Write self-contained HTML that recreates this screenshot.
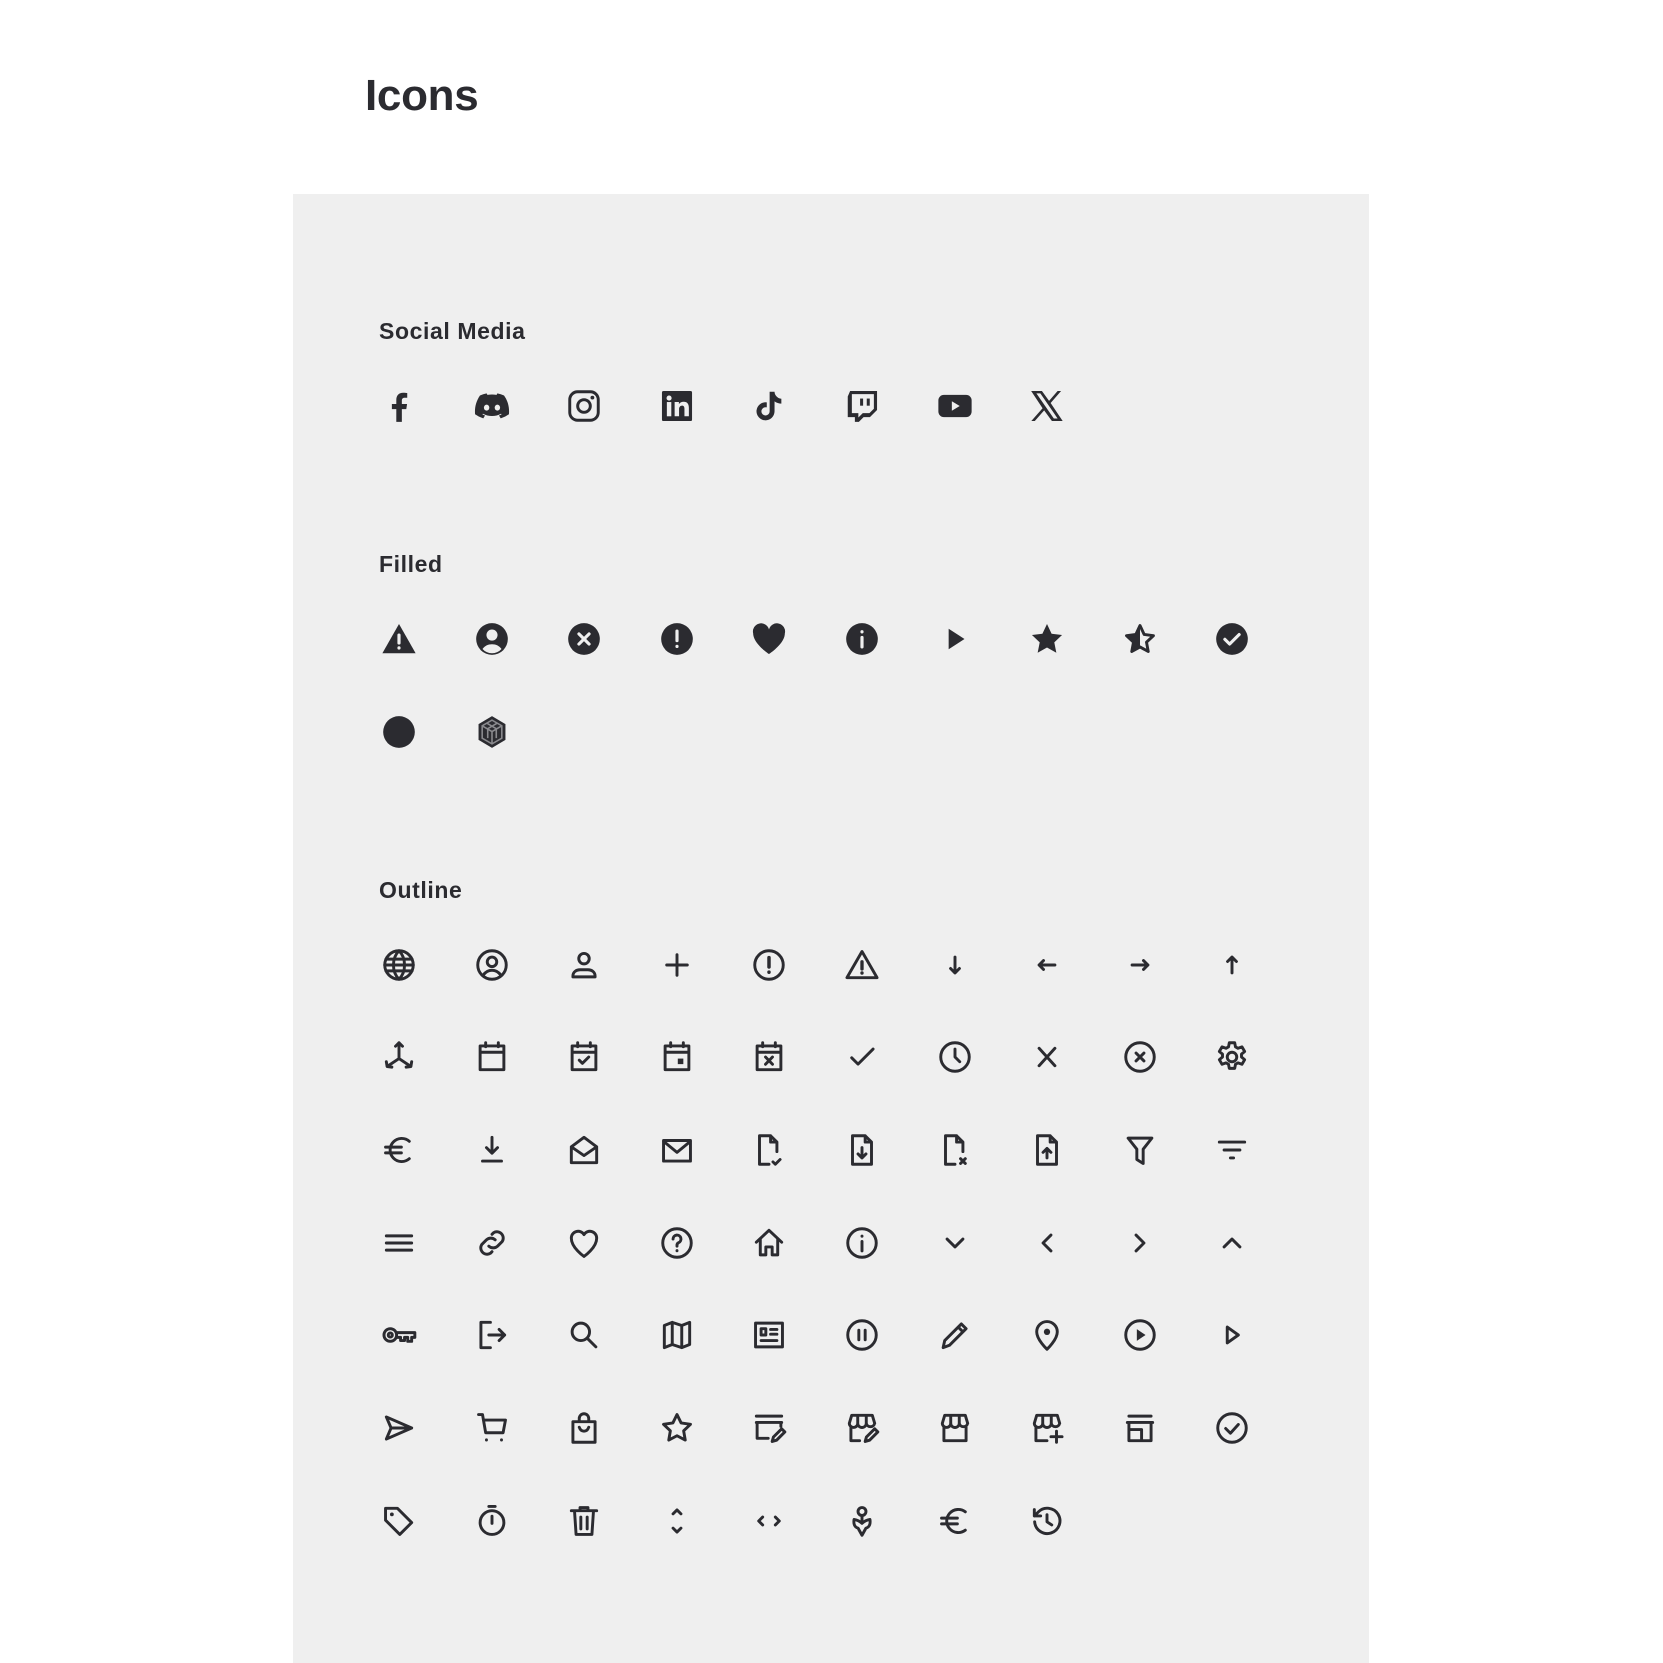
<!DOCTYPE html>
<html><head><meta charset="utf-8"><style>
html,body{margin:0;padding:0;background:#fff;width:1663px;height:1663px;overflow:hidden;font-family:"Liberation Sans",sans-serif;color:#2b2b30}
h1{position:absolute;left:365px;top:70px;margin:0;font-size:44px;font-weight:700;line-height:52px;letter-spacing:-0.3px}
.panel{position:absolute;left:293px;top:194px;width:1076px;height:1469px;background:#efefef}
.lbl{position:absolute;left:379px;font-size:23px;font-weight:700;line-height:28px;letter-spacing:0.6px}
svg{position:absolute;width:38px;height:38px}
.o{fill:none;stroke:#2b2b30;stroke-width:1.85;stroke-linecap:round;stroke-linejoin:round}
.f{fill:#2b2b30}
.b{fill:#efefef}
.bs{fill:none;stroke:#efefef;stroke-width:2;stroke-linecap:round}
</style></head><body>
<h1>Icons</h1>
<div class="panel"></div>
<div class="lbl" style="top:317px">Social Media</div>
<div class="lbl" style="top:550px">Filled</div>
<div class="lbl" style="top:876px">Outline</div>

<!-- Social -->
<svg viewBox="0 0 24 24" style="left:380px;top:387px"><path class="f" d="M13.8 22v-8h2.8l.5-3.3h-3.3V8.6c0-1 .4-1.8 1.8-1.8h1.6V3.8c-.4-.1-1.5-.2-2.6-.2-2.6 0-4.300 1.600-4.300 4.500v2.600H7.5V14h2.8v8z"/></svg>
<svg viewBox="0 0 24 24" style="left:473px;top:387px"><path class="f" d="M19.6 5.4A17 17 0 0 0 15.4 4l-.5 1a15 15 0 0 0-5.8 0L8.6 4a17 17 0 0 0-4.2 1.4C1.7 9.4 1 13.3 1.3 17.2a17 17 0 0 0 5.2 2.6l1.1-1.8c-.6-.2-1.2-.5-1.7-.8l.4-.3a12 12 0 0 0 11.4 0l.4.3c-.5.3-1.1.6-1.7.8l1.1 1.8a17 17 0 0 0 5.2-2.6c.4-4.5-.7-8.4-3.1-11.8z"/><ellipse class="b" cx="8.6" cy="13" rx="1.7" ry="1.9"/><ellipse class="b" cx="15.4" cy="13" rx="1.7" ry="1.9"/></svg>
<svg viewBox="0 0 24 24" style="left:565px;top:387px"><rect class="o" x="3" y="3" width="18" height="18" rx="5" stroke-width="2.2"/><circle class="o" cx="12" cy="12" r="4" stroke-width="2.2"/><circle class="f" cx="17.3" cy="6.7" r="1.2"/></svg>
<svg viewBox="0 0 24 24" style="left:658px;top:387px"><rect class="f" x="2.5" y="2.5" width="19" height="19" rx="1"/><circle class="b" cx="7" cy="7" r="1.6"/><rect class="b" x="5.6" y="9.5" width="2.8" height="9"/><path class="b" d="M10.5 9.5h2.7v1.3c.6-1 1.7-1.5 3-1.5 2.3 0 3.3 1.4 3.3 3.9V18.5h-2.8v-4.7c0-1.2-.4-2-1.5-2s-1.9.9-1.9 2.1v4.6h-2.8z"/></svg>
<svg viewBox="0 0 24 24" style="left:750px;top:387px"><path class="f" d="M16.6 5.8A4.3 4.3 0 0 1 15.5 3h-3.1v12.4a2.6 2.6 0 1 1-2.6-2.6c.3 0 .5 0 .8.1V9.7a5.7 5.7 0 1 0 4.9 5.7V9.1a7.3 7.3 0 0 0 4.3 1.4V7.4a4.3 4.3 0 0 1-3.2-1.6z"/></svg>
<svg viewBox="0 0 24 24" style="left:843px;top:387px"><path class="f" d="M4.5 2.5L3 6v13h4.5v3h2.5l3-3h4l4.5-4.5V2.5z"/><path class="b" d="M19.5 13.7l-2.8 2.8h-4.2l-2.8 2.8v-2.8H5.6V4.5h13.9z"/><rect class="f" x="10.8" y="7.3" width="1.9" height="4.5"/><rect class="f" x="15" y="7.3" width="1.9" height="4.5"/></svg>
<svg viewBox="0 0 24 24" style="left:936px;top:387px"><rect class="f" x="1.5" y="5" width="21" height="14" rx="3.5"/><path class="b" d="M10 9v6l5-3z"/></svg>
<svg viewBox="0 0 24 24" style="left:1028px;top:387px"><path class="f" d="M2 2.5h6.8l4.5 6.3 5.4-6.3h2.2l-6.6 7.6L21.9 21.5h-6.8l-4.9-6.7-5.9 6.7H2.1l7.1-8.1z"/><path class="b" d="M5.3 4l11 15.9h2.4L7.8 4z"/></svg>

<!-- Filled row 1 -->
<svg viewBox="0 0 24 24" style="left:380px;top:620px"><path class="f" d="M12 2.5L1.5 21h21z"/><path class="bs" d="M12 9.5v5M12 17.6v.1"/></svg>
<svg viewBox="0 0 24 24" style="left:473px;top:620px"><circle class="f" cx="12" cy="12" r="10"/><circle class="b" cx="12" cy="9.5" r="3.5"/><path class="b" d="M6 18.3c1.5-2 3.5-3 6-3s4.5 1 6 3a8 8 0 0 1-12 0z"/></svg>
<svg viewBox="0 0 24 24" style="left:565px;top:620px"><circle class="f" cx="12" cy="12" r="10"/><path class="bs" d="M8.8 8.8l6.4 6.4M15.2 8.8l-6.4 6.4" stroke-width="2.2"/></svg>
<svg viewBox="0 0 24 24" style="left:658px;top:620px"><circle class="f" cx="12" cy="12" r="10"/><path class="bs" d="M12 7v6M12 16.6v.1" stroke-width="2.3"/></svg>
<svg viewBox="0 0 24 24" style="left:750px;top:620px"><path class="f" d="M12 21.5S2 15 2 8.5A5 5 0 0 1 12 6a5 5 0 0 1 10 2.5C22 15 12 21.5 12 21.5z"/></svg>
<svg viewBox="0 0 24 24" style="left:843px;top:620px"><circle class="f" cx="12" cy="12" r="10"/><path class="bs" d="M12 11v6M12 7.4v.1" stroke-width="2.3"/></svg>
<svg viewBox="0 0 24 24" style="left:936px;top:620px"><path class="f" d="M8 5.5v13l10-6.5z"/></svg>
<svg viewBox="0 0 24 24" style="left:1028px;top:620px"><path class="f" d="M12 2.5l2.9 6.2 6.6.8-4.9 4.6 1.3 6.6L12 17.4l-5.9 3.3 1.3-6.6-4.9-4.6 6.6-.8z"/></svg>
<svg viewBox="0 0 24 24" style="left:1121px;top:620px"><path class="o" d="M12 3.5l2.6 5.6 5.9.8-4.4 4.1 1.1 5.9L12 17l-5.2 2.9 1.1-5.9-4.4-4.1 5.9-.8z" stroke-width="1.8"/><path class="f" d="M12 3.5V17l-5.2 2.9 1.1-5.9-4.4-4.1 5.9-.8z"/></svg>
<svg viewBox="0 0 24 24" style="left:1213px;top:620px"><circle class="f" cx="12" cy="12" r="10"/><path class="bs" d="M7.5 12.2l3 3 6-6" stroke-width="2.3" stroke-linejoin="round"/></svg>
<!-- Filled row 2 -->
<svg viewBox="0 0 24 24" style="left:380px;top:713px"><circle class="f" cx="12" cy="12" r="10"/></svg>
<svg viewBox="0 0 24 24" style="left:473px;top:713px"><path class="f" d="M12 2l8.5 5v10L12 22l-8.5-5V7z"/><path fill="none" stroke="#8a8a8e" stroke-width="1" d="M12 4.5l6.2 3.6v7.8L12 19.5l-6.2-3.6V8.1zM5.8 8.1L12 11.7l6.2-3.6M12 11.7v7.8M8.5 6.3l6.2 3.6v6M15.5 6.3L9.3 9.9v6"/></svg>

<!-- Outline row 1 -->
<svg viewBox="0 0 24 24" style="left:380px;top:946px"><g class="o"><circle cx="12" cy="12" r="9"/><path d="M3 12h18M3.8 8.3h16.4M3.8 15.7h16.4M12 3c2.5 2.5 3.5 5.5 3.5 9s-1 6.5-3.5 9c-2.5-2.5-3.5-5.5-3.5-9S9.5 5.5 12 3z"/></g></svg>
<svg viewBox="0 0 24 24" style="left:473px;top:946px"><g class="o"><circle cx="12" cy="12" r="9"/><circle cx="12" cy="10" r="3"/><path d="M6.5 18.3c1.5-2 3.3-3 5.5-3s4 1 5.5 3"/></g></svg>
<svg viewBox="0 0 24 24" style="left:565px;top:946px"><g class="o"><circle cx="12" cy="8" r="3.3"/><path d="M5 19.5v-.5c0-2.5 2-4 4.5-4h5c2.5 0 4.5 1.5 4.5 4v.5z"/></g></svg>
<svg viewBox="0 0 24 24" style="left:658px;top:946px"><path class="o" d="M12 5.5v13M5.5 12h13"/></svg>
<svg viewBox="0 0 24 24" style="left:750px;top:946px"><g class="o"><circle cx="12" cy="12" r="9"/><path d="M12 7.3v6M12 16.5v.1" stroke-width="2.2"/></g></svg>
<svg viewBox="0 0 24 24" style="left:843px;top:946px"><g class="o"><path d="M12 3.5L2.5 20h19z"/><path d="M12 10v4.5M12 17v.1" stroke-width="2.1"/></g></svg>
<svg viewBox="0 0 24 24" style="left:936px;top:946px"><path class="o" d="M12 7v10M9.2 14.2L12 17l2.8-2.8" stroke-width="2"/></svg>
<svg viewBox="0 0 24 24" style="left:1028px;top:946px"><path class="o" d="M17 12H7M9.8 9.2L7 12l2.8 2.8" stroke-width="2"/></svg>
<svg viewBox="0 0 24 24" style="left:1121px;top:946px"><path class="o" d="M7 12h10M14.2 9.2L17 12l-2.8 2.8" stroke-width="2"/></svg>
<svg viewBox="0 0 24 24" style="left:1213px;top:946px"><path class="o" d="M12 17V7M9.2 9.8L12 7l2.8 2.8" stroke-width="2"/></svg>

<!-- Outline row 2 -->
<svg viewBox="0 0 24 24" style="left:380px;top:1038px"><path class="o" d="M12 3v10M12 13l-7.5 5M12 13l7.5 5M9.8 5.2L12 3l2.2 2.2M4 15l.5 3 3 .4M20 15l-.5 3-3 .4"/></svg>
<svg viewBox="0 0 24 24" style="left:473px;top:1038px"><path class="o" d="M4.5 5h15v15h-15zM4.5 9h15M8 3v2.5M16 3v2.5"/></svg>
<svg viewBox="0 0 24 24" style="left:565px;top:1038px"><path class="o" d="M4.5 5h15v15h-15zM4.5 9h15M8 3v2.5M16 3v2.5M9 14l2 2 4-4"/></svg>
<svg viewBox="0 0 24 24" style="left:658px;top:1038px"><path class="o" d="M4.5 5h15v15h-15zM4.5 9h15M8 3v2.5M16 3v2.5"/><rect class="f" x="12.5" y="13" width="3.5" height="3.5"/></svg>
<svg viewBox="0 0 24 24" style="left:750px;top:1038px"><path class="o" d="M4.5 5h15v15h-15zM4.5 9h15M8 3v2.5M16 3v2.5M9.8 12l4.4 4.6M14.2 12l-4.4 4.6"/></svg>
<svg viewBox="0 0 24 24" style="left:843px;top:1038px"><path class="o" d="M5.5 12.5l4 4L19 7"/></svg>
<svg viewBox="0 0 24 24" style="left:936px;top:1038px"><g class="o"><circle cx="12" cy="12" r="9"/><path d="M12 7v5l3 3"/></g></svg>
<svg viewBox="0 0 24 24" style="left:1028px;top:1038px"><path class="o" d="M7 6.5l10 11M17 6.5l-10 11"/></svg>
<svg viewBox="0 0 24 24" style="left:1121px;top:1038px"><g class="o"><circle cx="12" cy="12" r="9"/><path d="M9.5 9.5l5 5M14.5 9.5l-5 5"/></g></svg>
<svg viewBox="0 0 24 24" style="left:1213px;top:1038px"><g class="o"><circle cx="12" cy="12" r="3"/><path d="M10.3 3h3.4l.5 2.6 1.6.9 2.5-.9 1.7 2.9-2 1.7v1.8l2 1.7-1.7 2.9-2.5-.9-1.6.9-.5 2.6h-3.4l-.5-2.6-1.6-.9-2.5.9-1.7-2.9 2-1.7v-1.8l-2-1.7 1.7-2.9 2.5.9 1.6-.9z"/></g></svg>

<!-- Outline row 3 -->
<svg viewBox="0 0 24 24" style="left:380px;top:1131px"><path class="o" d="M18.5 6.5A7.3 7.3 0 1 0 18.5 17.5M3.5 10.2h10M3.5 13.8h10" stroke-width="2.1"/></svg>
<svg viewBox="0 0 24 24" style="left:473px;top:1131px"><path class="o" d="M12 4v10M8.5 10.5L12 14l3.5-3.5M6 19h12"/></svg>
<svg viewBox="0 0 24 24" style="left:565px;top:1131px"><path class="o" d="M4 10l8-6 8 6v10H4zM4 10l8 5.5 8-5.5"/></svg>
<svg viewBox="0 0 24 24" style="left:658px;top:1131px"><path class="o" d="M3.5 6h17v13h-17zM3.5 6.5l8.5 7 8.5-7"/></svg>
<svg viewBox="0 0 24 24" style="left:750px;top:1131px"><path class="o" d="M13 3H6v18h6M13 3l4 4v6M13 3v4h4M14.5 19.5l1.5 1.5 3-3"/></svg>
<svg viewBox="0 0 24 24" style="left:843px;top:1131px"><path class="o" d="M14 3H6v18h12V7zM14 3v4h4M12 10.5v6M9.5 14.5L12 17l2.5-2.5"/></svg>
<svg viewBox="0 0 24 24" style="left:936px;top:1131px"><path class="o" d="M13 3H6v18h6M13 3l4 4v6M13 3v4h4M15.5 17.5l3 3M18.5 17.5l-3 3"/></svg>
<svg viewBox="0 0 24 24" style="left:1028px;top:1131px"><path class="o" d="M14 3H6v18h12V7zM14 3v4h4M12 17v-6M9.5 13.5L12 11l2.5 2.5"/></svg>
<svg viewBox="0 0 24 24" style="left:1121px;top:1131px"><path class="o" d="M4.5 4.5h15l-5.5 7v9l-4-2.5v-6.5z"/></svg>
<svg viewBox="0 0 24 24" style="left:1213px;top:1131px"><path class="o" d="M4 7h16M7 12h10M11 17h2"/></svg>

<!-- Outline row 4 -->
<svg viewBox="0 0 24 24" style="left:380px;top:1224px"><path class="o" d="M4 7.5h16M4 12h16M4 16.5h16"/></svg>
<svg viewBox="0 0 24 24" style="left:473px;top:1224px"><path class="o" d="M10 14a4 4 0 0 0 5.5 0l3-3a4 4 0 0 0-5.5-5.5l-1 1M14 10a4 4 0 0 0-5.5 0l-3 3a4 4 0 0 0 5.5 5.5l1-1"/></svg>
<svg viewBox="0 0 24 24" style="left:565px;top:1224px"><path class="o" d="M12 20.5S4 15 4 9a4.3 4.3 0 0 1 8-2.3A4.3 4.3 0 0 1 20 9c0 6-8 11.5-8 11.5z"/></svg>
<svg viewBox="0 0 24 24" style="left:658px;top:1224px"><g class="o"><circle cx="12" cy="12" r="9"/><path d="M9.5 9.5a2.5 2.5 0 1 1 3.5 2.3c-.6.3-1 .8-1 1.5v.7M12 16.8v.1"/></g></svg>
<svg viewBox="0 0 24 24" style="left:750px;top:1224px"><path class="o" d="M4 11.5l8-7.5 8 7.5M6.5 9.5V19.5h3.5v-5h4v5h3.5V9.5"/></svg>
<svg viewBox="0 0 24 24" style="left:843px;top:1224px"><g class="o"><circle cx="12" cy="12" r="9"/><path d="M12 11v6M12 7.6v.1"/></g></svg>
<svg viewBox="0 0 24 24" style="left:936px;top:1224px"><path class="o" d="M7 9.5l5 5 5-5" stroke-width="2.3"/></svg>
<svg viewBox="0 0 24 24" style="left:1028px;top:1224px"><path class="o" d="M14.5 7l-5 5 5 5" stroke-width="2.3"/></svg>
<svg viewBox="0 0 24 24" style="left:1121px;top:1224px"><path class="o" d="M9.5 7l5 5-5 5" stroke-width="2.3"/></svg>
<svg viewBox="0 0 24 24" style="left:1213px;top:1224px"><path class="o" d="M7 14.5l5-5 5 5" stroke-width="2.3"/></svg>

<!-- Outline row 5 -->
<svg viewBox="0 0 24 24" style="left:380px;top:1316px"><g class="o"><circle cx="6.5" cy="12" r="4"/><circle cx="6.5" cy="12" r="1.3"/><path d="M10.5 10.5H22v3h-2v2.5h-2.5v-2.5h-2v2h-2.5v-2h-2.5"/></g></svg>
<svg viewBox="0 0 24 24" style="left:473px;top:1316px"><path class="o" d="M11 4H5v16h6M10 12h10M16.5 8.5L20 12l-3.5 3.5"/></svg>
<svg viewBox="0 0 24 24" style="left:565px;top:1316px"><g class="o"><circle cx="10" cy="10" r="5.5"/><path d="M14 14l5.5 5.5"/></g></svg>
<svg viewBox="0 0 24 24" style="left:658px;top:1316px"><path class="o" d="M4 6l5-2 6 2 5-2v14l-5 2-6-2-5 2zM9 4v14M15 6v14"/></svg>
<svg viewBox="0 0 24 24" style="left:750px;top:1316px"><g class="o"><path d="M3.5 4.5h17v15h-17z"/><path d="M7 8h3v4H7zM13 8.5h4M13 11.5h4M7 15.5h10"/></g></svg>
<svg viewBox="0 0 24 24" style="left:843px;top:1316px"><g class="o"><circle cx="12" cy="12" r="9"/><path d="M10 9v6M14 9v6"/></g></svg>
<svg viewBox="0 0 24 24" style="left:936px;top:1316px"><path class="o" d="M4.5 20l1-4.5L16 5l3 3L8.5 18.5zM14 7l3 3"/></svg>
<svg viewBox="0 0 24 24" style="left:1028px;top:1316px"><path class="o" d="M12 21s-6.5-6-6.5-11a6.5 6.5 0 0 1 13 0c0 5-6.5 11-6.5 11z"/><circle class="f" cx="12" cy="10" r="2"/></svg>
<svg viewBox="0 0 24 24" style="left:1121px;top:1316px"><circle class="o" cx="12" cy="12" r="9"/><path class="f" d="M10 8.3v7.4l5.5-3.7z"/></svg>
<svg viewBox="0 0 24 24" style="left:1213px;top:1316px"><path class="o" d="M9 7v10l7-5z" stroke-width="2"/></svg>

<!-- Outline row 6 -->
<svg viewBox="0 0 24 24" style="left:380px;top:1409px"><path class="o" d="M4 5l16 7-16 7 3-7zM7 12h13"/></svg>
<svg viewBox="0 0 24 24" style="left:473px;top:1409px"><path class="o" d="M3.5 3.5h2.5l2 11.5h11l1.5-8H7M8.5 19.5v.1M18 19.5v.1" stroke-width="2.2"/></svg>
<svg viewBox="0 0 24 24" style="left:565px;top:1409px"><path class="o" d="M5 8h14v13H5zM9 8V6a3 3 0 0 1 6 0v2M9 11.5c.5 1.5 1.5 2.5 3 2.5s2.5-1 3-2.5"/></svg>
<svg viewBox="0 0 24 24" style="left:658px;top:1409px"><path class="o" d="M12 3.5l2.6 5.3 5.9.9-4.3 4.1 1 5.8L12 16.9l-5.2 2.7 1-5.8-4.3-4.1 5.9-.9z"/></svg>
<svg viewBox="0 0 24 24" style="left:750px;top:1409px"><path class="o" d="M4 4.5h16M4 8.5h16M4.5 8.5v10h7M19.5 8.5v2.5M14 20.5l.8-2.8 5.2-5.2 2 2-5.2 5.2z"/></svg>
<svg viewBox="0 0 24 24" style="left:843px;top:1409px"><path class="o" d="M4 9l1.5-5h13L20 9M4 9a2.6 2.6 0 0 0 5.3 0 2.7 2.7 0 0 0 5.4 0A2.7 2.7 0 0 0 20 9M9.3 4v5M14.7 4v5M5 11.5v8.5h5.5M14 20.5l.8-2.8 5.2-5.2 2 2-5.2 5.2z"/></svg>
<svg viewBox="0 0 24 24" style="left:936px;top:1409px"><path class="o" d="M4 9l1.5-5h13L20 9M4 9a2.6 2.6 0 0 0 5.3 0 2.7 2.7 0 0 0 5.4 0A2.7 2.7 0 0 0 20 9M9.3 4v5M14.7 4v5M5 11.5V20h14v-8.5"/></svg>
<svg viewBox="0 0 24 24" style="left:1028px;top:1409px"><path class="o" d="M4 9l1.5-5h13L20 9M4 9a2.6 2.6 0 0 0 5.3 0 2.7 2.7 0 0 0 5.4 0A2.7 2.7 0 0 0 20 9M9.3 4v5M14.7 4v5M5 11.5V20h7M18 14v7M14.5 17.5h7"/></svg>
<svg viewBox="0 0 24 24" style="left:1121px;top:1409px"><path class="o" d="M5 4.5h14M4 8.5h16M5 8.5V20M19 8.5V20M5 13h8v7M5 20h14"/></svg>
<svg viewBox="0 0 24 24" style="left:1213px;top:1409px"><g class="o"><circle cx="12" cy="12" r="9"/><path d="M8 12.3l3 3 5-5.5"/></g></svg>

<!-- Outline row 7 -->
<svg viewBox="0 0 24 24" style="left:380px;top:1502px"><path class="o" d="M3.5 4v7.5l9 9 7.5-7.5-9-9H4z"/><circle class="f" cx="7.5" cy="7.8" r="1.2"/></svg>
<svg viewBox="0 0 24 24" style="left:473px;top:1502px"><g class="o"><circle cx="12" cy="13" r="7.5"/><path d="M10 2.8h4M12 9v4.5"/></g></svg>
<svg viewBox="0 0 24 24" style="left:565px;top:1502px"><path class="o" d="M4 5.5h16M9.5 5.5V3.5h5v2M6 5.5l1 15h10l1-15M10 9.5v7.5M14 9.5v7.5"/></svg>
<svg viewBox="0 0 24 24" style="left:658px;top:1502px"><path class="o" d="M9.5 7.5L12 5l2.5 2.5M9.5 16.5L12 19l2.5-2.5"/></svg>
<svg viewBox="0 0 24 24" style="left:750px;top:1502px"><path class="o" d="M8 9.5L5.5 12 8 14.5M16 9.5l2.5 2.5-2.5 2.5"/></svg>
<svg viewBox="0 0 24 24" style="left:843px;top:1502px"><g class="o"><circle cx="12" cy="6" r="2.5"/><path d="M12 8.5v3M7 11c-.5 3 .5 5 2.5 5.5L12 21l2.5-4.5c2-.5 3-2.5 2.5-5.5M7 11c2 .3 3.5 1 5 2.5 1.5-1.5 3-2.2 5-2.5"/></g></svg>
<svg viewBox="0 0 24 24" style="left:936px;top:1502px"><path class="o" d="M18.5 6.2A7.3 7.3 0 1 0 18.5 17.8M3.5 10.2h10M3.5 13.8h10" stroke-width="2.6"/></svg>
<svg viewBox="0 0 24 24" style="left:1028px;top:1502px"><path class="o" d="M4.2 12.5A8 8 0 1 0 6.5 6.3L4 8.8M4 4.8v4h4M12 8v4.5l3 2"/></svg>
</body></html>
